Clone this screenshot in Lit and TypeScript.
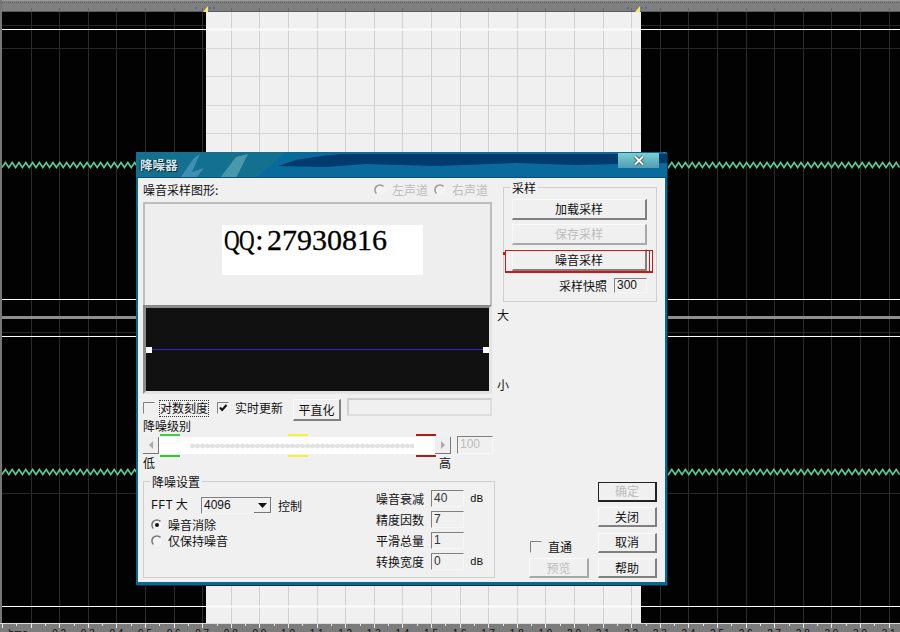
import { LitElement, html, css, svg } from "lit";
import { customElement } from "lit/decorators.js";

const range = (n: number) => Array.from({ length: n }, (_, i) => i);
const gridX = range(32).map((i) => Math.round(2 + i * 28.6) + 0.5);

function wave(y: number) {
  const pts: string[] = [];
  for (let i = 0; i * 3.4 < 900; i++) pts.push(`${2 + i * 3.4},${y + (i % 2 ? -2.5 : 2.5)}`);
  return pts.join(" ");
}

const radio = (on: boolean, off = false) => html`<svg class="glyph" width="12" height="12" viewBox="0 0 12 12">
  <circle cx="6" cy="6" r="5" fill="#f4f4f4"></circle>
  <path d="M9.5 2.4A5 5 0 0 0 2.4 9.5" fill="none" stroke="${off ? "#9a9a9a" : "#777"}" stroke-width="1.5"></path>
  ${on ? svg`<circle cx="6" cy="6" r="2" fill="#111"></circle>` : ""}
</svg>`;

const check = (on: boolean) => html`<svg class="glyph" width="12" height="12" viewBox="0 0 12 12">
  <path d="M.5 11.5V.5H11.5" fill="none" stroke="#808080"></path>
  ${on ? svg`<path d="M3 5.5 5.2 8 9.5 3" fill="none" stroke="#111" stroke-width="2"></path>` : ""}
</svg>`;

@customElement("app-root")
export class AppRoot extends LitElement {
  static styles = css`
    :host {
      display: block;
      position: relative;
      width: 900px;
      height: 632px;
      overflow: hidden;
      background: #000;
      font: 12px/14px "Noto Sans CJK SC", "Liberation Sans", sans-serif;
      color: #111;
    }
    .canvas { position: absolute; inset: 0; display: block; }
    .rulertext { font: 10px "Liberation Sans", sans-serif; fill: #111; text-anchor: middle; }

    .dialog {
      position: absolute;
      left: 136px;
      top: 152px;
      width: 527px;
      border: solid #0a6792;
      border-width: 0 2px 3px;
      background: #f0f0f0;
      box-shadow: 1px 1px 0 #062c40;
    }
    .title {
      position: relative;
      height: 26px;
      margin: 0 -2px;
      border-radius: 4px 4px 0 0;
      background: #0a6a9c;
      overflow: hidden;
      display: flex;
      justify-content: space-between;
    }
    .title svg.deco { position: absolute; inset: 0; }
    .title-text {
      position: relative;
      padding: 6px 0 0 4px;
      font-weight: 700;
      font-size: 12.5px;
      color: #d5e6ea;
      text-shadow: 1px 1px 0 #0c2c3c, -1px 0 0 #0c2c3c;
    }
    .close {
      position: relative;
      width: 41px;
      height: 15px;
      margin: 1px 8px 0 0;
      background: linear-gradient(#7fcfcf, #4d9db4);
      display: flex;
      align-items: center;
      justify-content: center;
    }

    .body {
      display: grid;
      grid-template-columns: 352px 154px;
      column-gap: 8px;
      height: 396px;
      padding: 4px 8px 4px 5px;
    }
    .left, .right { display: flex; flex-direction: column; min-width: 0; }

    .glyph { flex: none; display: block; }
    .row { display: flex; align-items: center; }
    .head { height: 16px; justify-content: space-between; }
    .radios { display: flex; gap: 6px; padding-right: 7px; color: #bcbcbc; }
    .radio { display: flex; align-items: center; gap: 6px; }
    .graph {
      box-sizing: border-box;
      width: 349px;
      height: 103px;
      margin-top: 4px;
      border: 2px solid #bdbdbd;
      border-bottom: 0;
      background: #eeeeee;
      padding: 21px 0 0 77px;
    }
    .qq {
      width: 201px;
      height: 50px;
      background: #fff;
      display: flex;
      font: 30px/30px "Liberation Serif", serif;
      -webkit-text-stroke: 0.3px #000;
      color: #000;
    }
    .qq span { width: 15px; flex: none; text-align: center; }
    .qq span.q { transform: scaleX(0.72); transform-origin: center; }
    .spec-row { display: flex; gap: 5px; width: 368px; }
    .spec {
      position: relative;
      width: 349px;
      height: 89px;
      flex: none;
      box-sizing: border-box;
      border: 3px solid #8a8a8a;
      border-right-color: #e4e4e4;
      border-bottom-color: #e4e4e4;
      background: #111;
    }
    .spec::before {
      content: "";
      position: absolute;
      left: 4px;
      right: 4px;
      top: 41px;
      height: 1px;
      background: #2a2ad0;
    }
    .knob { position: absolute; top: 39px; width: 6px; height: 6px; background: #fff; }
    .knob.a { left: 0; }
    .knob.b { right: 0; }
    .axis { display: flex; flex-direction: column; justify-content: space-between; padding: 3px 0 2px; height: 84px; }

    .opts { height: 23px; margin-top: 4px; align-items: flex-start; }
    .opts .glyph { margin-top: 4px; }
    .dotted { border: 1px dotted #333; margin: 2px 8px 0 4px; line-height: 14px; height: 15px; }
    .opt-text { margin: 3px 10px 0 6px; }
    .btn {
      box-sizing: border-box;
      display: flex;
      align-items: center;
      justify-content: center;
      background: #f0f0f0;
      border: 1px solid #fafafa;
      border-right: 2px solid #808080;
      border-bottom: 2px solid #808080;
      flex: none;
    }
    .btn.dis { color: #bcbcbc; border-right-color: #a8a8a8; border-bottom-color: #a8a8a8; }
    .btn.def { border: 2px solid #222; border-left-width: 1px; border-top-width: 1px; }
    .flat { width: 48px; height: 22px; margin-top: 1px; }
    .blank {
      box-sizing: border-box;
      width: 145px;
      height: 18px;
      margin-left: 6px;
      border: 2px solid #cfcfcf;
      border-right-color: #dedede;
      border-bottom-color: #dedede;
    }
    .lbl { margin-top: -2px; height: 14px; }

    .slider { height: 24px; align-items: center; }
    .arrow {
      box-sizing: border-box;
      width: 16px;
      height: 17px;
      flex: none;
      display: flex;
      align-items: center;
      justify-content: center;
      background: #efefef;
      border-right: 1px solid #777;
      border-bottom: 1px solid #777;
    }
    .track {
      position: relative;
      width: 276px;
      height: 17px;
      flex: none;
      background: #fff;
    }
    .dots {
      position: absolute;
      left: 31px;
      right: 21px;
      top: 2px;
      bottom: 2px;
      background-image: radial-gradient(circle at center, #e2e2e2 0 2.2px, transparent 2.7px);
      background-size: 5px 6px;
      background-position: 0 4px;
      background-repeat: repeat-x;
    }
    .mark { position: absolute; width: 20px; height: 2px; }
    .mark.t { top: -3px; }
    .mark.b { bottom: -3px; }
    .num {
      box-sizing: border-box;
      border: 1px solid #f6f6f6;
      border-top-color: #808080;
      border-left-color: #808080;
      padding-left: 2px;
      font: 12px/15px "Liberation Sans", sans-serif;
      flex: none;
    }
    .num.mut { color: #bcbcbc; width: 36px; height: 18px; margin-left: 6px; }
    .ends { height: 13px; margin-top: -1px; justify-content: space-between; padding-right: 44px; }

    .group {
      box-sizing: border-box;
      border: 1px solid #cfcfcf;
    }
    .legend {
      width: fit-content;
      height: 14px;
      margin: -7px 0 0 6px;
      padding: 0 2px;
      background: #f0f0f0;
    }
    .nr { height: 97px; margin-top: 12px; }
    .nr-in { display: flex; }
    .nr-l { width: 232px; box-sizing: border-box; padding: 8px 0 0 7px; }
    .fft { height: 17px; font-family: "Liberation Mono", "Noto Sans CJK SC", monospace; font-size: 12px; word-spacing: -4px; }
    .fft-l { width: 50px; }
    .combo {
      box-sizing: border-box;
      width: 71px;
      height: 17px;
      border: 1px solid #f6f6f6;
      border-top-color: #808080;
      border-left-color: #808080;
      display: flex;
      justify-content: space-between;
      padding-left: 2px;
      font: 12px/15px "Liberation Sans", sans-serif;
    }
    .drop {
      width: 17px;
      height: 15px;
      box-sizing: border-box;
      border-right: 1px solid #777;
      border-bottom: 1px solid #777;
      display: flex;
      align-items: center;
      justify-content: center;
    }
    .ctl { margin-left: 6px; font-family: "Noto Sans CJK SC", sans-serif; font-size: 12px; }
    .pick { display: flex; flex-direction: column; gap: 2px; margin-top: 4px; }
    .pick .radio { gap: 5px; }
    .fields {
      display: grid;
      grid-template-columns: 48px 33px auto;
      column-gap: 7px;
      row-gap: 4px;
      grid-auto-rows: 17px;
      align-items: center;
      padding-top: 1px;
    }
    .fields .num { height: 17px; color: #333; }
    .db { font: 11px "Liberation Mono", monospace; margin-left: -1px; }

    .samp { height: 115px; margin-top: 5px; display: flex; flex-direction: column; }
    .samp-in { display: flex; flex-direction: column; gap: 4px; padding: 4px 9px 0 8px; }
    .samp .btn { height: 21px; width: 135px; }
    .mark-wrap { position: relative; width: fit-content; }
    .mark-wrap .btn { height: 22px; }
    .red {
      position: absolute;
      left: -7px;
      right: -6px;
      top: 1px;
      bottom: -2px;
      border: 1px solid #c81818;
      border-bottom-width: 2px;
    }
    .red::before {
      content: "";
      position: absolute;
      right: 2px;
      top: 0;
      bottom: 0;
      border-right: 1px solid #c81818;
    }
    .red::after {
      content: "";
      position: absolute;
      left: -3px;
      top: 1px;
      width: 3px;
      height: 3px;
      background: #c81818;
    }
    .snap { justify-content: flex-end; gap: 7px; height: 15px; margin-top: 3px; }
    .snap .num { width: 33px; height: 15px; line-height: 13px; }

    .bottom {
      margin-top: auto;
      display: flex;
      justify-content: flex-end;
      align-items: flex-end;
      gap: 9px;
    }
    .pass { display: flex; flex-direction: column; gap: 5px; }
    .pass .row { gap: 6px; padding-left: 1px; height: 12px; }
    .pass .btn { width: 60px; height: 20px; }
    .acts { display: flex; flex-direction: column; gap: 5.4px; }
    .acts .btn { width: 59px; height: 20px; }
  `;

  private canvas() {
    const dimBlack = [25, 48, 332, 493];
    const dimSel = [48, 76, 105, 133];
    const whites = [29.5, 299.5, 336.5, 606.5];
    const marks = [206, 638];
    return html`<svg class="canvas" width="900" height="632" viewBox="0 0 900 632" aria-hidden="true">
      <rect width="900" height="632" fill="#020202"></rect>
      <rect x="206" y="12" width="435" height="611" fill="#f0f0f0"></rect>
      ${gridX.slice(1).map((x) => {
        const inside = x > 206 && x < 641;
        return svg`<line x1=${x} x2=${x} y1="12" y2="623" stroke=${inside ? "#d0d0d0" : "#2c2c2c"}></line>`;
      })}
      ${dimBlack.map((y) => svg`
        <line x1="2" x2="206" y1=${y + 0.5} y2=${y + 0.5} stroke="#282828"></line>
        <line x1="641" x2="900" y1=${y + 0.5} y2=${y + 0.5} stroke="#282828"></line>`)}
      ${dimSel.map((y) => svg`<line x1="206" x2="641" y1=${y + 0.5} y2=${y + 0.5} stroke="#d6d6d6"></line>`)}
      ${whites.map((y) => svg`
        <line x1="2" x2="206" y1=${y} y2=${y} stroke="#fff"></line>
        <line x1="641" x2="900" y1=${y} y2=${y} stroke="#fff"></line>
        <line x1="206" x2="641" y1=${y} y2=${y} stroke="#fbfbfb" stroke-width="2"></line>`)}
      <line x1="2" x2="900" y1="317.5" y2="317.5" stroke="#8e8e8e" stroke-width="3"></line>
      <polyline points=${wave(165)} fill="none" stroke="#56cf9a" stroke-width="1.6"></polyline>
      <polyline points=${wave(472)} fill="none" stroke="#56cf9a" stroke-width="1.6"></polyline>

      <rect width="900" height="12" fill="#7f7f7f"></rect>
      <rect y="0" width="900" height="1" fill="#9a9a9a"></rect>
      <line x1="2" x2="900" y1="2.5" y2="2.5" stroke="#5f5f5f" stroke-dasharray="1 1"></line>
      <line x1="0" x2="900" y1="11.5" y2="11.5" stroke="#5a5a5a"></line>
      ${gridX.slice(1).map((x) => svg`<line x1=${x} x2=${x} y1="8" y2="12" stroke="#666"></line>`)}
      <rect width="2" height="632" fill="#777"></rect>
      ${marks.map((x) => svg`
        <path d="M${x - 11} 8h4M${x + 3} 8h6" stroke="#5a64b0" stroke-width="2" stroke-dasharray="2 2"></path>
        <path d="M${x + 2} 6v6h-5z" fill="#f4f058"></path>`)}

      <rect y="623" width="900" height="9" fill="#7c7c7c"></rect>
      <line x1="0" x2="900" y1="623.5" y2="623.5" stroke="#dcdcdc"></line>
      ${range(64).map((i) => svg`<line x1=${Math.round(2 + i * 14.3) + 0.5} x2=${Math.round(2 + i * 14.3) + 0.5} y1="624" y2=${i % 2 ? 626 : 628} stroke="#e8e8e8"></line>`)}
      <text class="rulertext" x="18" y="637">hms</text>
      ${range(30).map((i) => svg`<text class="rulertext" x=${2 + (i + 2) * 28.6} y="637">${((i + 2) / 10).toFixed(1)}</text>`)}
    </svg>`;
  }

  private titlebar() {
    return html`<div class="title">
      <svg class="deco" width="531" height="26" viewBox="0 0 531 26" aria-hidden="true">
        <path d="M0 0H150L120 26H0Z" fill="#13708f"></path>
        <path d="M142 14 160 8 185 4 205 2H531V11L440 13 380 11 300 14 230 12 190 15Z" fill="#013a6c"></path>
        <path d="M44 26 58 6 64 2 56 20 68 16 60 26Z" fill="#3f8fb4"></path>
        <path d="M84 26 100 5 112 2 100 26Z" fill="#4a98ac"></path>
        <path d="M1 25H531V26H1Z" fill="#05507e"></path>
      </svg>
      <div class="title-text">降噪器</div>
      <div class="close">
        <svg width="12" height="11" viewBox="0 0 12 11" aria-hidden="true">
          <path d="M2 1.5 10 9.5M10 1.5 2 9.5" stroke="#284c58" stroke-width="3.6"></path>
          <path d="M2 1.5 10 9.5M10 1.5 2 9.5" stroke="#fff" stroke-width="2"></path>
        </svg>
      </div>
    </div>`;
  }

  private leftCol() {
    const qq = "QQ:27930816".split("");
    return html`<div class="left">
      <div class="row head">
        <span>噪音采样图形:</span>
        <div class="radios">
          <div class="radio">${radio(false, true)}<span>左声道</span></div>
          <div class="radio">${radio(false, true)}<span>右声道</span></div>
        </div>
      </div>
      <div class="graph">
        <div class="qq">${qq.map((c) => html`<span class=${c === "Q" ? "q" : ""}>${c}</span>`)}</div>
      </div>
      <div class="spec-row">
        <div class="spec"><i class="knob a"></i><i class="knob b"></i></div>
        <div class="axis"><span>大</span><span>小</span></div>
      </div>
      <div class="row opts">
        ${check(false)}
        <span class="dotted">对数刻度</span>
        ${check(true)}
        <span class="opt-text">实时更新</span>
        <div class="btn flat">平直化</div>
        <div class="blank"></div>
      </div>
      <div class="lbl">降噪级别</div>
      <div class="row slider">
        <div class="arrow"><svg width="6" height="8" viewBox="0 0 6 8"><path d="M5 0V8L1 4Z" fill="#aaa"></path></svg></div>
        <div class="track">
          <div class="dots"></div>
          <i class="mark t" style="left:1px;background:#3ccf3c"></i>
          <i class="mark b" style="left:1px;background:#2ecb2e"></i>
          <i class="mark t" style="left:129px;background:#f5f03c"></i>
          <i class="mark b" style="left:129px;background:#f5f03c"></i>
          <i class="mark t" style="left:257px;background:#a81c1c"></i>
          <i class="mark b" style="left:257px;background:#a81c1c"></i>
        </div>
        <div class="arrow"><svg width="6" height="8" viewBox="0 0 6 8"><path d="M1 0V8L5 4Z" fill="#aaa"></path></svg></div>
        <div class="num mut">100</div>
      </div>
      <div class="row ends"><span>低</span><span>高</span></div>
      <div class="group nr">
        <div class="legend">降噪设置</div>
        <div class="nr-in">
          <div class="nr-l">
            <div class="row fft">
              <span class="fft-l">FFT 大</span>
              <div class="combo">
                <span>4096</span>
                <span class="drop"><svg width="9" height="5" viewBox="0 0 9 5"><path d="M0 0H9L4.5 5Z" fill="#111"></path></svg></span>
              </div>
              <span class="ctl">控制</span>
            </div>
            <div class="pick">
              <div class="radio">${radio(true)}<span>噪音消除</span></div>
              <div class="radio">${radio(false)}<span>仅保持噪音</span></div>
            </div>
          </div>
          <div class="fields">
            <span>噪音衰减</span><div class="num">40</div><span class="db">dB</span>
            <span>精度因数</span><div class="num">7</div><span></span>
            <span>平滑总量</span><div class="num">1</div><span></span>
            <span>转换宽度</span><div class="num">0</div><span class="db">dB</span>
          </div>
        </div>
      </div>
    </div>`;
  }

  private rightCol() {
    return html`<div class="right">
      <div class="group samp">
        <div class="legend">采样</div>
        <div class="samp-in">
          <div class="btn">加载采样</div>
          <div class="btn dis">保存采样</div>
          <div class="mark-wrap">
            <div class="btn">噪音采样</div>
            <div class="red"></div>
          </div>
          <div class="row snap"><span>采样快照</span><div class="num">300</div></div>
        </div>
      </div>
      <div class="bottom">
        <div class="pass">
          <div class="row">${check(false)}<span>直通</span></div>
          <div class="btn dis">预览</div>
        </div>
        <div class="acts">
          <div class="btn dis def">确定</div>
          <div class="btn">关闭</div>
          <div class="btn">取消</div>
          <div class="btn">帮助</div>
        </div>
      </div>
    </div>`;
  }

  render() {
    return html`${this.canvas()}
      <div class="dialog">
        ${this.titlebar()}
        <div class="body">${this.leftCol()}${this.rightCol()}</div>
      </div>`;
  }
}
